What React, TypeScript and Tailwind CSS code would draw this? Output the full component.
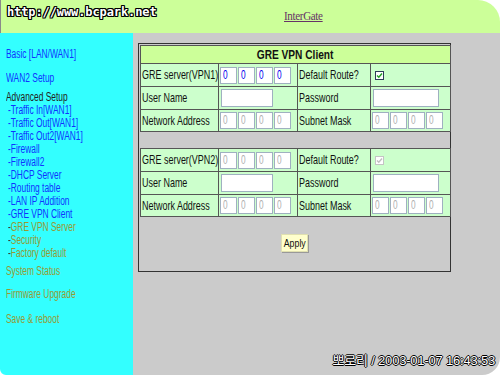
import React from 'react';

const ui = '"Liberation Sans", Arial, sans-serif';

// squeezes Arial-width text down to the narrow look of the original font
const Narrow: React.FC<{ children: React.ReactNode; side?: boolean }> = ({ children, side }) => (
  <span className={`inline-block origin-left whitespace-nowrap ${side ? 'scale-x-[0.7]' : 'scale-x-[0.69]'}`}>{children}</span>
);

const Octets: React.FC<{ active?: boolean }> = ({ active }) => (
  <div className="flex gap-[1px] pl-[1px]">
    {[0, 1, 2, 3].map((i) => (
      <div
        key={i}
        className={`w-[17px] h-[17px] bg-white border border-[#9fb0c0] text-[12px] leading-[15px] pl-[2px] ${active ? 'text-[#0000ee]' : 'text-[#b0b0b0]'}`}
      >
        <Narrow>0</Narrow>
      </div>
    ))}
  </div>
);

const TextBox: React.FC<{ w: number }> = ({ w }) => (
  <div className="h-[18px] bg-white border border-[#9fb0c0] ml-[2px]" style={{ width: w }} />
);

const Check: React.FC<{ disabled?: boolean }> = ({ disabled }) => (
  <div className={`ml-[4px] w-[9px] h-[9px] bg-white border ${disabled ? 'border-[#c4c4c4]' : 'border-[#2d3c58]'} flex items-center justify-center`}>
    <svg width="7" height="7" viewBox="0 0 7 7">
      <path d="M1 3.5 L2.8 5.3 L6 1.5" fill="none" stroke={disabled ? '#c0c0c0' : '#21a121'} strokeWidth="1.4" />
    </svg>
  </div>
);

const Label: React.FC<{ children: React.ReactNode }> = ({ children }) => (
  <td className="bg-[#ccffcc] border border-[#555] px-[1px] text-[13px] text-[#111] overflow-hidden">
    <Narrow>{children}</Narrow>
  </td>
);

const Field: React.FC<{ children: React.ReactNode }> = ({ children }) => (
  <td className="bg-[#ccffcc] border border-[#555] p-0">{children}</td>
);

const VpnTable: React.FC<{ n: number; title?: boolean }> = ({ n, title }) => (
  <table className="border-collapse w-full table-fixed">
    <colgroup>
      <col className="w-[78px]" />
      <col className="w-[79px]" />
      <col className="w-[73px]" />
      <col className="w-[80px]" />
    </colgroup>
    <tbody>
      {title && (
        <tr className="h-[18px]">
          <td colSpan={4} className="bg-[#ccff99] border border-[#555] text-center text-[13px] leading-[15px] font-bold text-[#111]">
            <span className="inline-block scale-x-[0.78]">GRE VPN Client</span>
          </td>
        </tr>
      )}
      <tr className="h-[23px]">
        <Label>GRE server(VPN{n})</Label>
        <Field><Octets active={n === 1} /></Field>
        <Label>Default Route?</Label>
        <Field><Check disabled={n !== 1} /></Field>
      </tr>
      <tr className="h-[23px]">
        <Label>User Name</Label>
        <Field><TextBox w={52} /></Field>
        <Label>Password</Label>
        <Field><TextBox w={66} /></Field>
      </tr>
      <tr className="h-[22px]">
        <Label>Network Address</Label>
        <Field><Octets /></Field>
        <Label>Subnet Mask</Label>
        <Field><Octets /></Field>
      </tr>
    </tbody>
  </table>
);

const blue = 'text-[#1033ff]';
const olive = 'text-[#999933]';

const subs: { t: string; on: boolean }[] = [
  { t: 'Traffic In[WAN1]', on: true },
  { t: 'Traffic Out[WAN1]', on: true },
  { t: 'Traffic Out2[WAN1]', on: true },
  { t: 'Firewall', on: true },
  { t: 'Firewall2', on: true },
  { t: 'DHCP Server', on: true },
  { t: 'Routing table', on: true },
  { t: 'LAN IP Addition', on: true },
  { t: 'GRE VPN Client', on: true },
  { t: 'GRE VPN Server', on: false },
  { t: 'Security', on: false },
  { t: 'Factory default', on: false },
];

export default function App() {
  return (
    <div className="w-[500px] h-[375px] bg-white">
      <div className="w-[500px] h-[375px] overflow-hidden rounded-tr-[22px] rounded-br-[18px] rounded-bl-[6px] flex flex-col" style={{ fontFamily: ui }}>
        <div className="h-[33px] bg-[#ccff99] border-l border-[#8a8a8a] relative shrink-0">
          <div
            className="absolute left-[6px] top-[3px] text-[12px] font-bold text-white tracking-[-0.1px] [text-shadow:1px_0_0_#000,-1px_0_0_#000,0_1px_0_#000,0_-1px_0_#000,1px_1px_0_#000,-1px_-1px_0_#000,1px_-1px_0_#000,-1px_1px_0_#000]"
            style={{ fontFamily: '"DejaVu Sans Mono", monospace' }}
          >
            http://www.bcpark.net
          </div>
          <div className="pl-[283px] pt-[3px]">
            <span
              className="inline-block origin-left scale-x-[0.85] text-[13px] text-[#663366] underline tracking-[-0.4px]"
              style={{ fontFamily: '"Liberation Serif", "Times New Roman", serif' }}
            >
              InterGate
            </span>
          </div>
        </div>
        <div className="flex flex-1 relative">
          <div className="w-[133px] bg-[#33ffff] pt-[15px] pl-[6px] text-[12px] leading-[13px] shrink-0">
            <div className={blue}><Narrow side>Basic [LAN/WAN1]</Narrow></div>
            <div className={`${blue} mt-[11px]`}><Narrow side>WAN2 Setup</Narrow></div>
            <div className="text-[#222] mt-[6px]"><Narrow side>Advanced Setup</Narrow></div>
            <div className="pl-[2px]">
              {subs.map((s) => (
                <div key={s.t} className={s.on ? blue : olive}>
                  <Narrow side>
                    <span className={s.on ? 'text-[#1033ff]' : 'text-[#333]'}>-</span>
                    {s.t}
                  </Narrow>
                </div>
              ))}
            </div>
            <div className={`${olive} mt-[5px]`}><Narrow side>System Status</Narrow></div>
            <div className={`${olive} mt-[10px]`}><Narrow side>Firmware Upgrade</Narrow></div>
            <div className={`${olive} mt-[12px]`}><Narrow side>Save &amp; reboot</Narrow></div>
          </div>
          <div className="flex-1 bg-[#cbcbcb] pl-[5px] pt-[10px]">
            <div className="w-[313px] h-[229px] border border-[#333] p-[1px] flex flex-col">
              <VpnTable n={1} title />
              <div className="h-[16px]" />
              <VpnTable n={2} />
              <div className="flex justify-center mt-[17px]">
                <button className="w-[27px] h-[18px] bg-[#ffffcc] border border-[#e0e0b0] shadow-[1px_1px_0_#999] text-[11px] text-[#111] flex items-center justify-center">
                  <span className="inline-block scale-x-[0.8]">Apply</span>
                </button>
              </div>
            </div>
          </div>
          <div
            className="absolute right-[5px] bottom-[5px] text-[13px] text-white tracking-[-0.2px] [text-shadow:1px_0_0_#000,-1px_0_0_#000,0_1px_0_#000,0_-1px_0_#000]"
            style={{ fontFamily: '"Liberation Sans", "Noto Sans CJK KR", sans-serif' }}
          >
            뽀로리 / 2003-01-07 16:43:53
          </div>
        </div>
      </div>
    </div>
  );
}
